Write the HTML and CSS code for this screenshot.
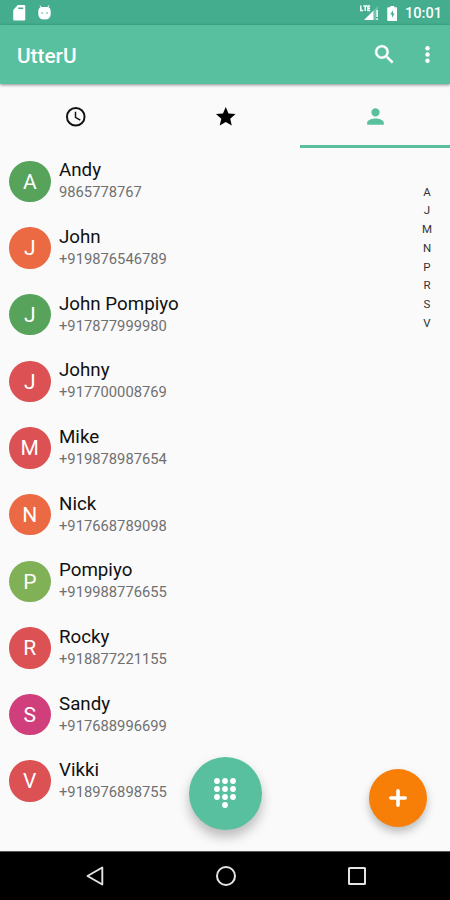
FILE: index.html
```html
<!DOCTYPE html>
<html lang="en">
<head>
<meta charset="utf-8">
<title>UtterU</title>
<link rel="stylesheet" href="styles.css">
</head>
<body>
<div class="phone">
  <div class="status">
    <svg class="sd" viewBox="0 0 12 16"><path fill="#fff" fill-rule="evenodd" d="M4.500 0H11a1 1 0 0 1 1 1v13.500a1 1 0 0 1-1 1H1a1 1 0 0 1-1-1V5zM5 2.500v1.600h5V2.500z"/></svg>
    <svg class="droid" viewBox="0 0 13 16"><path stroke="#fff" stroke-width="1" d="M2 .5l2 3M11 .5l-2 3"/><path fill="#fff" d="M.3 6.500Q.3 2 4 2h5q3.700 0 3.700 4.500V9q0 5.500-6.200 5.500T.3 9z"/><circle cx="4" cy="8" r=".8" fill="#43ad8e"/><circle cx="9" cy="8" r=".8" fill="#43ad8e"/></svg>
    <div class="status-right">
      <svg class="signal" viewBox="0 0 19 16"><path fill="none" stroke="#fff" stroke-width="1.400" d="M.8.500v5H3.200M3.400 1H7M5.200 1v5M10.200 1H7.900v4.500h2.300M7.900 3.200H10"/><path fill="#fff" d="M4 15L13.500 5.500V15zM16.300 5h1.600v7h-1.600zM16.300 13.300h1.600V15h-1.600z"/><path fill="#fff" opacity=".25" d="M13.500 5.500L18 1v4h-2v10h-2.500z"/></svg>
      <svg class="battery" viewBox="0 0 10 15"><path fill="#fff" d="M3 0h4v1.300h2q1 0 1 1V14q0 1-1 1H1q-1 0-1-1V2.300q0-1 1-1h2z"/><path fill="#43ad8e" d="M5.700 4.300L3 8.500h1.800v3.200L7.300 7.500H5.700z"/></svg>
      <span class="time">10:01</span>
    </div>
  </div>
  <header class="appbar">
    <h1 class="title">UtterU</h1>
    <svg class="search" viewBox="0 0 24 24"><path fill="#fff" stroke="#fff" stroke-width=".4" d="M15.500 14h-.79l-.28-.27A6.470 6.470 0 0 0 16 9.500 6.500 6.500 0 1 0 9.500 16c1.610 0 3.090-.59 4.230-1.570l.27.28v.79l5 4.990L20.490 19zm-6 0C7.010 14 5 11.990 5 9.500S7.010 5 9.500 5 14 7.010 14 9.500 11.990 14 9.500 14z"/></svg>
    <svg class="more" viewBox="0 0 24 24" fill="#fff"><circle cx="12" cy="6" r="2.100"/><circle cx="12" cy="12" r="2.100"/><circle cx="12" cy="18" r="2.100"/></svg>
  </header>
  <nav class="tabs">
    <div class="tab"><svg class="tab-icon" viewBox="0 0 24 24"><path fill="#111" d="M12 2a10 10 0 1 0 0 20 10 10 0 0 0 0-20zm0 18a8 8 0 1 1 0-16 8 8 0 0 1 0 16zM12.500 7H11v6l5.250 3.150.75-1.230-4.500-2.670z"/></svg></div>
    <div class="tab"><svg class="tab-icon" viewBox="0 0 24 24"><path fill="#000" d="M12 17.270L18.180 21l-1.640-7.030L22 9.240l-7.190-.61L12 2 9.190 8.630 2 9.240l5.460 4.730L5.820 21z"/></svg></div>
    <div class="tab active"><svg class="tab-icon person" viewBox="0 0 24 24"><path fill="#59c09f" d="M12 12a4 4 0 1 0 0-8 4 4 0 0 0 0 8zm0 2c-2.670 0-8 1.340-8 4v2h16v-2c0-2.660-5.330-4-8-4z"/></svg></div>
  </nav>
  <main class="content">
    <ul class="list">
      <li class="row"><span class="avatar green">A</span><div class="who"><div class="name">Andy</div><div class="number">9865778767</div></div></li>
      <li class="row"><span class="avatar orange">J</span><div class="who"><div class="name">John</div><div class="number">+919876546789</div></div></li>
      <li class="row"><span class="avatar green">J</span><div class="who"><div class="name">John Pompiyo</div><div class="number">+917877999980</div></div></li>
      <li class="row"><span class="avatar red">J</span><div class="who"><div class="name">Johny</div><div class="number">+917700008769</div></div></li>
      <li class="row"><span class="avatar red">M</span><div class="who"><div class="name">Mike</div><div class="number">+919878987654</div></div></li>
      <li class="row"><span class="avatar orange">N</span><div class="who"><div class="name">Nick</div><div class="number">+917668789098</div></div></li>
      <li class="row"><span class="avatar lime">P</span><div class="who"><div class="name">Pompiyo</div><div class="number">+919988776655</div></div></li>
      <li class="row"><span class="avatar red">R</span><div class="who"><div class="name">Rocky</div><div class="number">+918877221155</div></div></li>
      <li class="row"><span class="avatar pink">S</span><div class="who"><div class="name">Sandy</div><div class="number">+917688996699</div></div></li>
      <li class="row"><span class="avatar red">V</span><div class="who"><div class="name">Vikki</div><div class="number">+918976898755</div></div></li>
    </ul>
    <div class="index"><span>A</span><span>J</span><span>M</span><span>N</span><span>P</span><span>R</span><span>S</span><span>V</span></div>
    <div class="fab dial"><svg class="pad" viewBox="0 0 22 30" fill="#fff"><circle cx="3" cy="3" r="2.900"/><circle cx="11" cy="3" r="2.900"/><circle cx="19" cy="3" r="2.900"/><circle cx="3" cy="11" r="2.900"/><circle cx="11" cy="11" r="2.900"/><circle cx="19" cy="11" r="2.900"/><circle cx="3" cy="19" r="2.900"/><circle cx="11" cy="19" r="2.900"/><circle cx="19" cy="19" r="2.900"/><circle cx="11" cy="27" r="2.900"/></svg></div>
    <div class="fab add"><svg class="plus" viewBox="0 0 18 18"><path stroke="#fff" stroke-width="3.600" stroke-linecap="round" d="M9 1.800v14.400M1.800 9h14.400"/></svg></div>
  </main>
  <footer class="navbar">
    <div class="key"><svg class="key-icon" viewBox="0 0 24 24"><path fill="none" stroke="#e4e4e4" stroke-width="1.900" stroke-linejoin="round" d="M4.500 12L19.300 3.500v17z"/></svg></div>
    <div class="key"><svg class="key-icon" viewBox="0 0 24 24"><circle cx="12" cy="12" r="9" fill="none" stroke="#e4e4e4" stroke-width="2"/></svg></div>
    <div class="key"><svg class="key-icon" viewBox="0 0 24 24"><rect x="4" y="4" width="16" height="16" rx=".5" fill="none" stroke="#e4e4e4" stroke-width="2"/></svg></div>
  </footer>
</div>
</body>
</html>
```
FILE: styles.css
```css
* { box-sizing: border-box; }
body { margin: 0; font-family: Roboto, "Liberation Sans", sans-serif; background: #fafafa; }
svg { display: block; flex: none; }
.phone { width: 450px; height: 900px; display: flex; flex-direction: column; overflow: hidden; }
.status { height: 25px; flex: none; background: #43ad8e; display: flex; align-items: flex-start; padding: 5px 8px 0 13px; }
.sd { width: 12.500px; height: 16px; }
.droid { width: 13px; height: 16px; margin: -.5px 0 0 12px; }
.status-right { margin-left: auto; display: flex; }
.signal { width: 19px; height: 16px; }
.battery { width: 10.500px; height: 15px; margin: 1px 7.500px 0 8px; }
.time { font-size: 14.600px; font-weight: 500; line-height: 17px; color: #fff; }
.appbar { height: 58.500px; flex: none; position: relative; background: #59c09f; box-shadow: 0 1px 3px rgba(0,0,0,.45); display: flex; align-items: center; padding: 0 10px 0 17px; }
.title { margin: 3px auto 0 0; font-size: 20.800px; font-weight: 500; line-height: 24px; color: #fff; }
.search { width: 25px; height: 25px; margin-right: 18.500px; }
.more { width: 25px; height: 25px; }
.tabs { height: 64.500px; flex: none; display: flex; padding-left: 1px; }
.tab { flex: 1; display: flex; justify-content: center; align-items: center; border-bottom: 3px solid transparent; padding-top: 4px; }
.active { border-color: #59c09f; }
.tab-icon { width: 23.500px; height: 23.500px; }
.person { width: 25px; height: 25px; }
.content { flex: 1; position: relative; }
.list { margin: 0; padding: 0 0 0 9px; list-style: none; }
.row { height: 66.670px; display: flex; align-items: center; gap: 8.500px; }
.who { padding-top: 2px; }
.avatar { width: 41.500px; height: 41.500px; border-radius: 50%; color: #fff; font-size: 21px; line-height: 42px; text-align: center; }
.green { background: #57a35c; }
.orange { background: #eb6a43; }
.red { background: #dc5153; }
.lime { background: #80b156; }
.pink { background: #d03f7b; }
.name { font-size: 18.750px; line-height: 21px; color: #111; }
.number { font-size: 14.750px; line-height: 23px; color: #707070; }
.index { position: absolute; top: 34.500px; right: 12px; width: 22px; display: flex; flex-direction: column; align-items: center; font-size: 11.500px; line-height: 18.750px; color: #333; }
.fab { position: absolute; border-radius: 50%; display: flex; align-items: center; justify-content: center; }
.dial { left: 189px; top: 609px; width: 73px; height: 73px; background: #59c09f; box-shadow: 0 7px 12px rgba(0,0,0,.26); }
.pad { width: 22px; height: 30px; margin: 0 1px 1px 0; }
.add { left: 369px; top: 621px; width: 58px; height: 58px; background: #f77f07; box-shadow: 0 5px 8px rgba(0,0,0,.25); }
.plus { width: 18px; height: 18px; }
.navbar { position: relative; height: 49.500px; flex: none; background: #000; border-top: 1px solid #555; display: flex; justify-content: center; padding-left: 1.500px; }
.key { width: 131px; display: flex; align-items: center; justify-content: center; }
.key-icon { width: 24px; height: 24px; }
```
